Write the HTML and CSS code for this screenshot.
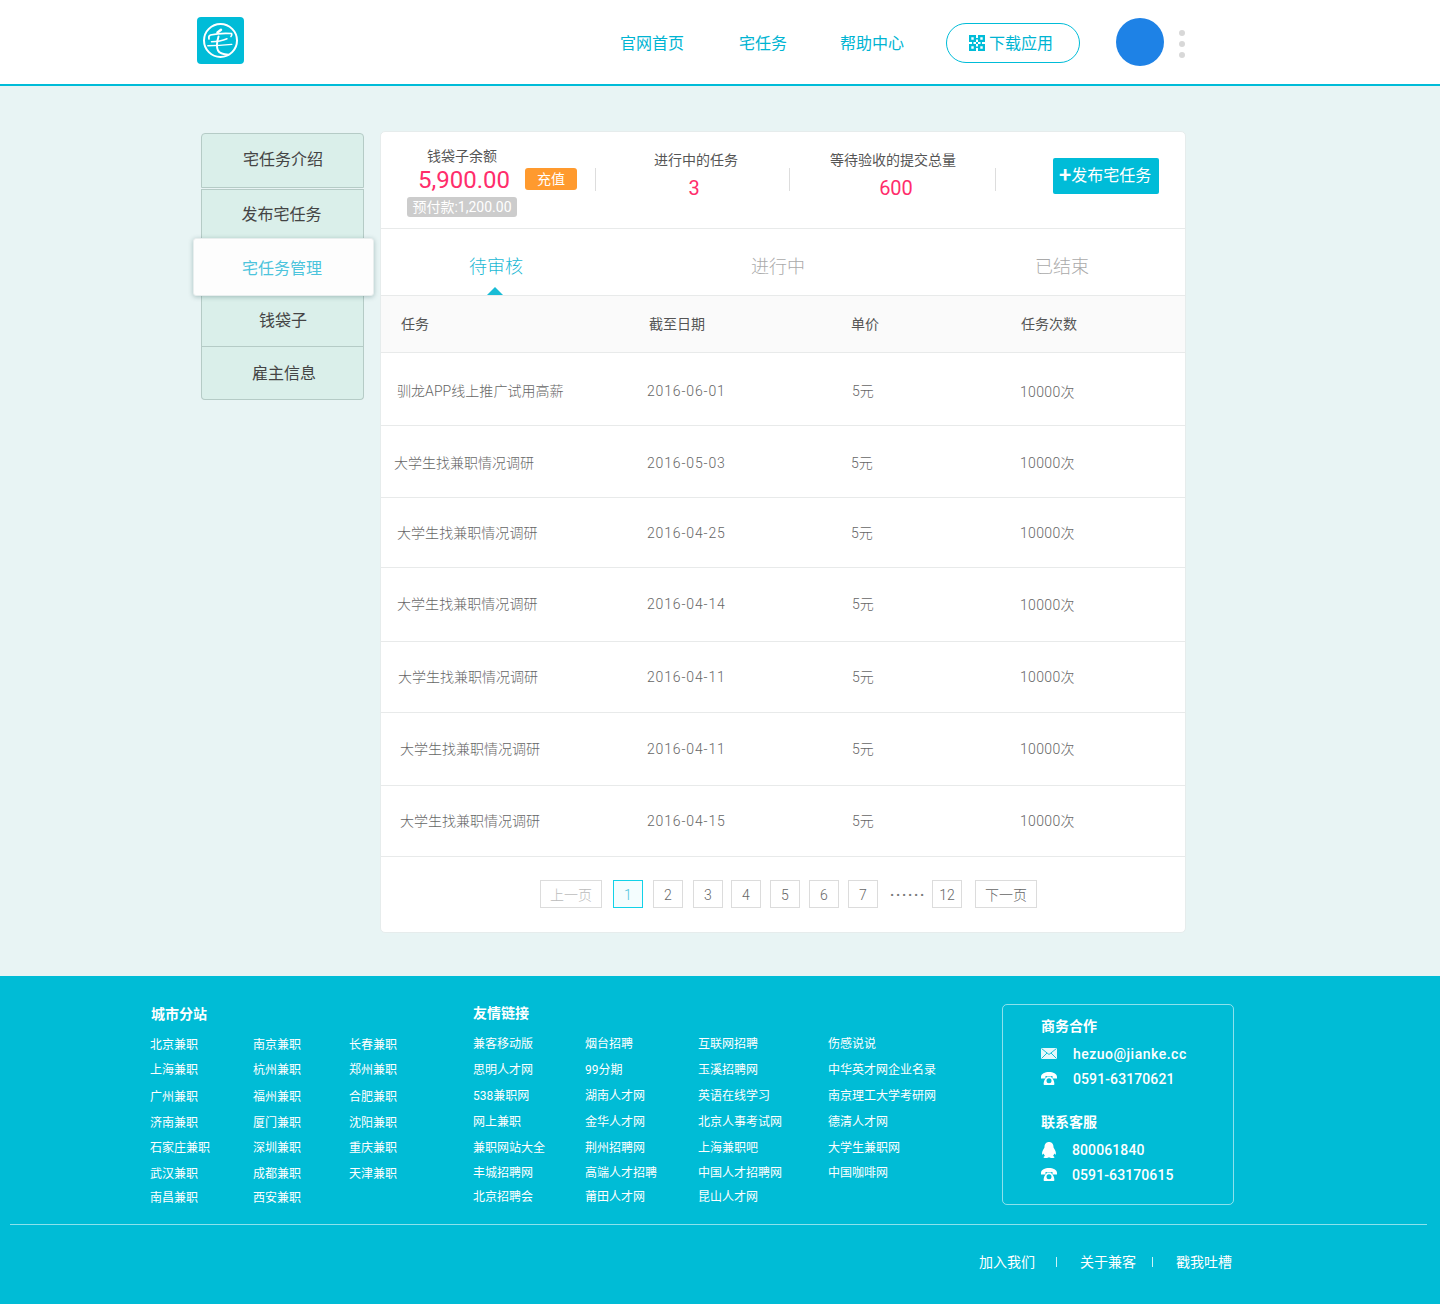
FILE: index.html
```html
<!DOCTYPE html>
<html lang="zh-CN">
<head>
<meta charset="utf-8">
<title>宅任务管理</title>
<link rel="stylesheet" href="styles.css">
</head>
<body>
<header class="topbar">
  <a class="logo" href="#">
    <svg width="47" height="47" viewBox="0 0 47 47">
      <rect width="47" height="47" rx="4" fill="#00bcd8"/>
      <circle cx="23.5" cy="23.5" r="16.500" fill="none" stroke="#fff" stroke-width="2"/>
      <g fill="none" stroke="#fff" stroke-linecap="round">
        <path d="M12 22c-.5-2 0-3.500 1.500-4 6-1.500 13-2 21-1.500.5 1 .5 2-.5 3" stroke-width="1.700"/>
        <path d="M20.500 15.500l3.500-2.700" stroke-width="2.500"/>
        <path d="M14.500 24.800c5.500 0 11-1 15.500-3" stroke-width="1.500"/>
        <path d="M10.800 28.800c8 0 16.500-.6 24-1.400" stroke-width="1.400"/>
        <path d="M21.500 19.500c-1.500 5-2 11-.5 14 1.500 3 6 4 10.500 4.300" stroke-width="2"/>
      </g>
    </svg>
  </a>
  <nav class="nav">
    <a class="nav-link nav-home" href="#">官网首页</a>
    <a class="nav-link nav-task" href="#">宅任务</a>
    <a class="nav-link nav-help" href="#">帮助中心</a>
    <a class="download" href="#">
      <svg width="16" height="16" viewBox="0 0 16 16" fill="#00bcd8">
        <path fill-rule="evenodd" d="M0 0h7v7H0zM2.300 2.300v2.400h2.400V2.300zM9 0h7v7H9zM11.300 2.300v2.400h2.400V2.300zM0 9h7v7H0zM2.300 11.300v2.400h2.400v-2.400zM9 9h7v7H9zM11.300 11.300v2.400h2.400v-2.400zM7 3h2v1.500H7zM3 7h1.500v2H3zM7 7h2v2H7zM11.500 7H13v2h-1.500zM7 11.500h2V13H7z"/>
      </svg>
      <span>下载应用</span>
    </a>
    <span class="avatar"></span>
    <span class="dots"><i></i><i></i><i></i></span>
  </nav>
</header>

<main class="content">
  <aside class="side">
    <a class="side-item side-1" href="#">宅任务介绍</a>
    <a class="side-item side-2" href="#">发布宅任务</a>
    <a class="side-item side-active" href="#">宅任务管理</a>
    <a class="side-item side-4" href="#">钱袋子</a>
    <a class="side-item side-5" href="#">雇主信息</a>
  </aside>

  <section class="card">
    <div class="stats">
      <div class="stat stat-wallet">
        <div class="stat-label wallet-label">钱袋子余额</div>
        <div class="wallet-line"><span class="num wallet-num">5,900.00</span><a class="recharge" href="#">充值</a></div>
        <div class="prepaid">预付款:1,200.00</div>
      </div>
      <div class="stat stat-running">
        <div class="stat-label">进行中的任务</div>
        <div class="num stat-num">3</div>
      </div>
      <div class="stat stat-waiting">
        <div class="stat-label">等待验收的提交总量</div>
        <div class="num stat-num">600</div>
      </div>
      <div class="stat-action"><a class="publish" href="#"><span class="plus">+</span>发布宅任务</a></div>
    </div>

    <div class="tabs">
      <a class="tab tab-on" href="#">待审核</a>
      <a class="tab" href="#">进行中</a>
      <a class="tab" href="#">已结束</a>
    </div>

    <div class="thead">
      <span>任务</span><span>截至日期</span><span>单价</span><span>任务次数</span>
    </div>
    <div class="row row-1"><span class="t1">驯龙APP线上推广试用高薪</span><span class="d">2016-06-01</span><span class="p1">5元</span><span class="c">10000次</span></div>
    <div class="row row-2"><span class="t2">大学生找兼职情况调研</span><span class="d">2016-05-03</span><span class="p0">5元</span><span class="c">10000次</span></div>
    <div class="row row-3"><span class="t1">大学生找兼职情况调研</span><span class="d">2016-04-25</span><span class="p0">5元</span><span class="c">10000次</span></div>
    <div class="row row-4"><span class="t1">大学生找兼职情况调研</span><span class="d">2016-04-14</span><span class="p1">5元</span><span class="c">10000次</span></div>
    <div class="row row-5"><span class="t3">大学生找兼职情况调研</span><span class="d">2016-04-11</span><span class="p1">5元</span><span class="c">10000次</span></div>
    <div class="row row-6"><span class="t4">大学生找兼职情况调研</span><span class="d">2016-04-11</span><span class="p1">5元</span><span class="c">10000次</span></div>
    <div class="row row-7"><span class="t4">大学生找兼职情况调研</span><span class="d">2016-04-15</span><span class="p1">5元</span><span class="c">10000次</span></div>

    <div class="pager">
      <a class="pg pg-wide pg-off" href="#">上一页</a>
      <a class="pg pg-on" href="#">1</a>
      <a class="pg" href="#">2</a>
      <a class="pg" href="#">3</a>
      <a class="pg" href="#">4</a>
      <a class="pg" href="#">5</a>
      <a class="pg" href="#">6</a>
      <a class="pg" href="#">7</a>
      <span class="pg-dots">······</span>
      <a class="pg" href="#">12</a>
      <a class="pg pg-wide" href="#">下一页</a>
    </div>
  </section>
</main>

<footer class="footer">
  <div class="foot-top">
    <div class="foot-city">
      <h4 class="foot-h city-h">城市分站</h4>
      <div class="city-grid">
        <a>北京兼职</a><a>南京兼职</a><a>长春兼职</a>
        <a>上海兼职</a><a>杭州兼职</a><a>郑州兼职</a>
        <a>广州兼职</a><a>福州兼职</a><a>合肥兼职</a>
        <a>济南兼职</a><a>厦门兼职</a><a>沈阳兼职</a>
        <a>石家庄兼职</a><a>深圳兼职</a><a>重庆兼职</a>
        <a>武汉兼职</a><a>成都兼职</a><a>天津兼职</a>
        <a>南昌兼职</a><a>西安兼职</a>
      </div>
    </div>
    <div class="foot-links">
      <h4 class="foot-h links-h">友情链接</h4>
      <div class="link-grid">
        <a>兼客移动版</a><a>烟台招聘</a><a>互联网招聘</a><a>伤感说说</a>
        <a>思明人才网</a><a>99分期</a><a>玉溪招聘网</a><a>中华英才网企业名录</a>
        <a>538兼职网</a><a>湖南人才网</a><a>英语在线学习</a><a>南京理工大学考研网</a>
        <a>网上兼职</a><a>金华人才网</a><a>北京人事考试网</a><a>德清人才网</a>
        <a>兼职网站大全</a><a>荆州招聘网</a><a>上海兼职吧</a><a>大学生兼职网</a>
        <a>丰城招聘网</a><a>高端人才招聘</a><a>中国人才招聘网</a><a>中国咖啡网</a>
        <a>北京招聘会</a><a>莆田人才网</a><a>昆山人才网</a>
      </div>
    </div>
    <div class="contact">
      <h4 class="foot-h contact-h">商务合作</h4>
      <div class="contact-row">
        <svg class="ci" width="16" height="11" viewBox="0 0 16 11"><rect width="16" height="11" fill="#e6f8fb"/><path fill="none" stroke="#00bcd6" stroke-width=".9" d="M.5.500L8 6.500 15.500.500M.5 10.500l5.500-5.500M15.500 10.500L10 5"/></svg>
        <span class="email">hezuo@jianke.cc</span>
      </div>
      <div class="contact-row">
        <svg class="ci" width="16" height="13" viewBox="0 0 16 13"><path fill="#fff" fill-rule="evenodd" d="M0 5C0 1.500 4 0 8 0s8 1.500 8 5v1.500h-4.500V4h-7v2.500H0zM3.500 13c-.6 0-.9-.3-.9-.9 0-2.500 1.200-5.400 2.900-6.600l.4-1h4.200l.4 1c1.700 1.200 2.900 4.100 2.900 6.600 0 .6-.3.9-.9.9zM8 6.200a2.500 2.500 0 1 0 0 5 2.500 2.500 0 0 0 0-5z"/></svg>
        <span>0591-63170621</span>
      </div>
      <h4 class="foot-h contact-h contact-h2">联系客服</h4>
      <div class="contact-row contact-row-b">
        <svg class="ci" width="15" height="16" viewBox="0 0 15 16"><path fill="#fff" d="M7.500 0C10.500 0 12 2.300 12 5c0 .6.200 1 .6 1.500 1.300 1.700 2.200 4.100 1.700 5.800-.2.700-.8.400-1.500-.7-.2 1-.6 1.800-1.300 2.400 1 .4 1.600.9 1.400 1.400-.2.500-1.700.6-3 .6-1 0-1.700-.3-2.400-.7-.7.400-1.400.7-2.400.7-1.300 0-2.800-.1-3-.6-.2-.5.400-1 1.400-1.400-.7-.6-1.100-1.400-1.300-2.400-.7 1.100-1.300 1.400-1.500.7-.5-1.700.4-4.100 1.700-5.800C2.800 6 3 5.600 3 5c0-2.700 1.500-5 4.500-5z"/></svg>
        <span>800061840</span>
      </div>
      <div class="contact-row contact-row-b">
        <svg class="ci" width="16" height="13" viewBox="0 0 16 13"><path fill="#fff" fill-rule="evenodd" d="M0 5C0 1.500 4 0 8 0s8 1.500 8 5v1.500h-4.500V4h-7v2.500H0zM3.500 13c-.6 0-.9-.3-.9-.9 0-2.500 1.200-5.400 2.900-6.600l.4-1h4.200l.4 1c1.700 1.200 2.900 4.100 2.900 6.600 0 .6-.3.9-.9.9zM8 6.200a2.500 2.500 0 1 0 0 5 2.500 2.500 0 0 0 0-5z"/></svg>
        <span>0591-63170615</span>
      </div>
    </div>
  </div>
  <div class="foot-rule"></div>
  <div class="foot-bottom">
    <a>加入我们</a><i></i><a>关于兼客</a><i></i><a>戳我吐槽</a>
  </div>
</footer>
</body>
</html>
```
FILE: styles.css
```css
* { box-sizing: border-box; }
html, body { margin: 0; padding: 0; }
body {
  background: #e8f4f4;
  font-family: Roboto, "Noto Sans CJK SC", sans-serif;
  color: #555;
  font-size: 14px;
}
a { color: inherit; text-decoration: none; }

/* top bar */
.topbar {
  height: 86px;
  background: #fff;
  border-bottom: 2px solid #00bcd8;
  display: flex;
  padding: 17px 0 0 197px;
}
.logo { display: block; width: 47px; height: 47px; }
.nav { display: flex; align-items: flex-start; margin-left: 376px; }
.nav-link { color: #00b4d2; font-size: 16px; line-height: 24px; margin-top: 15px; }
.nav-task { margin-left: 55px; }
.nav-help { margin-left: 53px; }
.download {
  margin: 6px 0 0 42px;
  width: 134px;
  height: 40px;
  border: 1px solid #00bcd8;
  border-radius: 20px;
  color: #00b4d2;
  font-size: 16px;
  display: flex;
  align-items: center;
  padding-left: 22px;
  gap: 4px;
}
.download span { padding-bottom: 2px; }
.avatar {
  width: 48px;
  height: 48px;
  margin: 1px 0 0 36px;
  background: #1e82e6;
  border-radius: 50%;
}
.dots { display: flex; flex-direction: column; gap: 5px; margin: 13px 0 0 15px; }
.dots i { display: block; width: 6px; height: 6px; border-radius: 50%; background: #d8d8d8; }

/* content */
.content { display: flex; align-items: flex-start; height: 890px; padding: 45px 0 0 201px; }
.side { width: 163px; margin: 2px 16px 0 0; position: relative; }
.side-item {
  display: flex;
  align-items: center;
  justify-content: center;
  background: #daefea;
  border: 1px solid #b5cbc6;
  color: #444;
  font-size: 16px;
}
.side-1 { height: 55px; border-radius: 4px 4px 0 0; padding: 0 0 5px 1px; }
.side-2 { height: 50px; margin-top: 1px; border-width: 1px 1px 0; padding: 0 2px 3px 0; }
.side-active {
  position: relative;
  z-index: 1;
  height: 58px;
  width: 181px;
  margin: -1px 0 0 -8px;
  background: #fdfdfd;
  border: 1px solid #e8eeee;
  border-radius: 3px;
  color: #4cc4dc;
  box-shadow: 0 1px 5px rgba(0, 60, 60, .28);
  padding-right: 3px;
}
.side-4 { height: 51px; border-width: 0 1px 1px; padding-bottom: 4px; padding-left: 1px; }
.side-5 { height: 53px; margin-top: 0; border-width: 0 1px 1px; border-top-color: #e8f4f4; border-radius: 0 0 4px 4px; padding: 0 0 2px 3px; }

/* card */
.card {
  width: 806px;
  height: 802px;
  background: #fff;
  border: 1px solid #e6ecec;
  border-radius: 5px;
}
.stats { display: flex; height: 97px; border-bottom: 1px solid #e8eaea; position: relative; }
.stat { position: relative; text-align: center; }
.stat::after {
  content: "";
  position: absolute;
  right: 0;
  top: 36px;
  width: 1px;
  height: 23px;
  background: #ddd;
}
.stat-wallet { width: 215px; padding-top: 15px; }
.stat-running { width: 194px; padding: 18px 0 0 6px; }
.stat-waiting { width: 206px; padding-top: 18px; }
.stat-label { font-size: 14px; line-height: 20px; color: #555; }
.wallet-label { width: 162px; line-height: 18px; }
.num { color: #ff2d6b; }
.stat-num { font-size: 20px; line-height: 28px; margin-top: 4px; }
.stat-running .stat-num { padding-right: 4px; }
.stat-waiting .stat-num { padding-left: 6px; }
.wallet-line { display: flex; align-items: center; padding-left: 37px; height: 29px; }
.wallet-num { font-size: 24px; line-height: 29px; padding-top: 2px; }
.recharge {
  width: 52px;
  height: 22px;
  margin: -1px 0 0 15px;
  background: #ff9a2e;
  border-radius: 3px;
  color: #fff;
  font-size: 14px;
  line-height: 22px;
  text-align: center;
}
.prepaid {
  width: 110px;
  height: 20px;
  margin: 3px 0 0 26px;
  background: #ccc;
  border-radius: 3px;
  color: #fff;
  font-size: 14px;
  line-height: 20px;
  white-space: nowrap;
}
.stat-action { padding: 26px 0 0 57px; }
.publish {
  display: block;
  width: 106px;
  height: 36px;
  background: #00bcd8;
  border-radius: 2px;
  color: #fff;
  font-size: 16px;
  line-height: 35px;
  padding-left: 6px;
  white-space: nowrap;
}
.plus { font-size: 22px; font-weight: 500; vertical-align: -1px; line-height: 20px; }

/* tabs */
.tabs {
  display: grid;
  grid-template-columns: 282px 284px 1fr;
  height: 67px;
  padding-left: 88px;
  border-bottom: 1px solid #e8eaea;
}
.tab { position: relative; font-size: 18px; line-height: 76px; height: 66px; color: #aaa; font-weight: 300; }
.tab-on { color: #1ab8d4; }
.tab-on::after {
  content: "";
  position: absolute;
  left: 18px;
  bottom: 0;
  border: 8px solid transparent;
  border-top: 0;
  border-bottom-color: #18bcd6;
}

/* table */
.thead, .row {
  display: grid;
  grid-template-columns: 266px 204px 169px 1fr;
  align-items: center;
  border-bottom: 1px solid #e8eaea;
}
.thead { height: 57px; background: #fafafa; color: #555; padding-bottom: 3px; }
.thead span:nth-child(1) { padding-left: 20px; }
.thead span:nth-child(2) { padding-left: 2px; }
.thead span:nth-child(4) { padding-left: 1px; }
.row { color: #666; font-size: 14px; font-weight: 300; }
.row span { white-space: nowrap; }
.row-1 { height: 73px; padding-top: 2px; }
.row-2 { height: 72px; }
.row-3 { height: 70px; padding-bottom: 2px; }
.row-4 { height: 74px; padding-bottom: 3px; }
.row-5 { height: 71px; padding-bottom: 3px; }
.row-6 { height: 73px; padding-bottom: 3px; }
.row-7 { height: 71px; padding-bottom: 3px; }
.t1 { padding-left: 16px; letter-spacing: .05px; }
.t2 { padding-left: 13px; }
.t3 { padding-left: 17px; }
.t4 { padding-left: 19px; }
.d { letter-spacing: .85px; padding-top: 2px; color: #666; }
.c { letter-spacing: .35px; padding-top: 1px; }
.p1 { padding-left: 1px; }

/* pager */
.pager {
  display: grid;
  grid-template-columns: 73px 40px 40px 38px 39px 39px 39px 42px 42px 43px 62px;
  justify-items: start;
  align-items: center;
  padding: 23px 0 0 159px;
}
.pg {
  width: 30px;
  height: 28px;
  border: 1px solid #dcdcdc;
  color: #666;
  font-size: 14px;
  font-weight: 300;
  line-height: 29px;
  text-align: center;
}
.pg-wide { width: 62px; }
.pg-off { color: #bbb; }
.pg-on { background: #f4fdfe; border-color: #12d2e8; color: #4cc4dc; }
.pg-dots { color: #777; font-size: 14px; line-height: 22px; letter-spacing: 1.800px; font-weight: 700; white-space: nowrap; padding-top: 2px; }

/* footer */
.footer {
  height: 328px;
  background: #00bcd6;
  color: #fff;
}
.foot-top { display: flex; height: 248px; padding: 28px 0 0 150px; }
.foot-h { margin: 0; font-size: 14px; font-weight: 700; line-height: 20px; }
.city-h { padding-left: 1px; }
.links-h { margin-top: -1px; }
.foot-city { width: 323px; }
.foot-links { width: 529px; }
.city-grid, .link-grid { font-size: 12px; line-height: 20px; display: grid; white-space: nowrap; }
.city-grid {
  margin-top: 11px;
  grid-template-columns: 103px 96px 1fr;
  grid-template-rows: 25px 27px 26px 25px 26px 24px 20px;
}
.link-grid {
  margin-top: 11px;
  grid-template-columns: 112px 113px 130px 1fr;
  grid-template-rows: 26px 26px 26px 26px 25px 24px 20px;
}
.contact {
  width: 232px;
  height: 201px;
  border: 1px solid rgba(255, 255, 255, .55);
  border-radius: 5px;
  padding: 11px 0 0 38px;
}
.contact-h { line-height: 20px; }
.contact-h2 { margin-top: 21px; }
.contact-row {
  display: flex;
  align-items: center;
  height: 25px;
  font-size: 14px;
  font-weight: 500;
  letter-spacing: .1px;
}
.email { letter-spacing: .5px; }
.contact-h + .contact-row { margin-top: 5px; }
.ci { flex: none; width: 16px; margin-right: 16px; }
.contact-row-b .ci { margin-right: 15px; }
.foot-rule { height: 1px; margin: 0 13px 0 10px; background: rgba(255, 255, 255, .55); }
.foot-bottom {
  display: flex;
  align-items: center;
  justify-content: flex-end;
  padding: 27px 208px 0 0;
  font-size: 14px;
  line-height: 20px;
}
.foot-bottom i { display: block; width: 1px; height: 10px; background: rgba(255, 255, 255, .8); margin: 0 23px 0 21px; }
.foot-bottom i:nth-of-type(2) { margin: 0 23px 0 16px; }
```
